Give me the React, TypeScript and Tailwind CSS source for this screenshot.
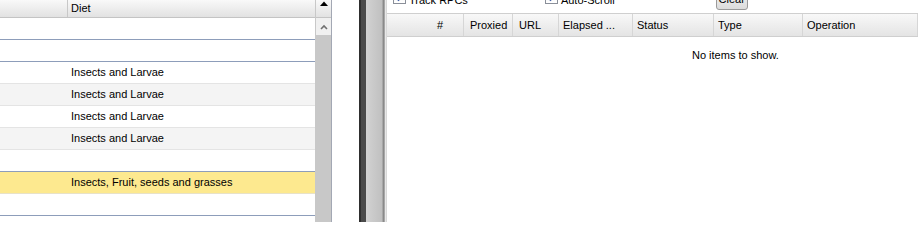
import React from "react";

type Row = { bg: string; border: string; text: string };

const rows: Row[] = [
  { bg: "bg-white", border: "border-[#8d9dba]", text: "" },
  { bg: "bg-white", border: "border-[#8d9dba]", text: "" },
  { bg: "bg-white", border: "border-[#e4e4e4]", text: "Insects and Larvae" },
  { bg: "bg-[#f4f4f4]", border: "border-[#e4e4e4]", text: "Insects and Larvae" },
  { bg: "bg-white", border: "border-[#e4e4e4]", text: "Insects and Larvae" },
  { bg: "bg-[#f4f4f4]", border: "border-[#e4e4e4]", text: "Insects and Larvae" },
  { bg: "bg-white", border: "border-[#8d9dba]", text: "" },
  { bg: "bg-[#fde98f]", border: "border-[#e8e2c8]", text: "Insects, Fruit, seeds and grasses" },
  { bg: "bg-white", border: "border-[#8d9dba]", text: "" },
  { bg: "bg-white", border: "border-[#e4e4e4]", text: "" },
];

const cols = [
  { label: "#", w: "w-[77px]", align: "justify-end pr-[20px]" },
  { label: "Proxied", w: "w-[49px]", align: "pl-[6px]" },
  { label: "URL", w: "w-[46px]", align: "pl-[6px]" },
  { label: "Elapsed ...", w: "w-[74px]", align: "pl-[4px]" },
  { label: "Status", w: "w-[81px]", align: "pl-[4px]" },
  { label: "Type", w: "w-[89px]", align: "pl-[4px]" },
  { label: "Operation", w: "flex-1", align: "pl-[4px]" },
];

function Check() {
  return (
    <div className="w-[13px] h-[13px] border border-[#8a8f99] bg-gradient-to-b from-[#f0f0f0] to-[#ffffff] flex items-center justify-center">
      <svg width="9" height="9" viewBox="0 0 9 9">
        <path d="M1 4.5 L3.5 7 L8 1.5" stroke="#3a5aa8" strokeWidth="1.8" fill="none" />
      </svg>
    </div>
  );
}

export default function App() {
  return (
    <div className="flex w-[918px] h-[222px] overflow-hidden bg-white text-[11px] text-black font-['Liberation_Sans',Arial,sans-serif]">
      {/* Left grid */}
      <div className="flex w-[332px] shrink-0 border-r border-[#a3a8b4]">
        <div className="flex flex-col w-[315px] shrink-0">
          <div className="flex h-[18px] shrink-0 border-b border-[#c4c4c4] bg-gradient-to-b from-[#f9f9f9] to-[#e2e2e2]">
            <div className="w-[68px] border-r border-[#c8c8c8]" />
            <div className="flex-1 pl-[3px] flex items-center leading-none">Diet</div>
          </div>
          {rows.map((r, i) => (
            <div
              key={i}
              className={`h-[22px] shrink-0 border-b ${r.border} ${r.bg} flex items-center pl-[71px] leading-none`}
            >
              {r.text}
            </div>
          ))}
        </div>
        <div className="flex flex-col w-[16px] shrink-0 border-l border-[#c8c8c8]">
          <div className="h-[18px] shrink-0 border-b border-[#c4c4c4] bg-gradient-to-b from-[#f9f9f9] to-[#e2e2e2] flex justify-center pt-[1px]">
            <svg width="8" height="5" viewBox="0 0 8 5">
              <path d="M0 5 L4 0.5 L8 5 Z" fill="#000" />
            </svg>
          </div>
          <div className="h-[17px] shrink-0 bg-[#f0f0f0] flex justify-center pt-[6px]">
            <svg width="8" height="6" viewBox="0 0 8 6">
              <path d="M1 5 L4 2 L7 5" stroke="#707070" strokeWidth="1.6" fill="none" />
            </svg>
          </div>
          <div className="flex-1 bg-[#c8c8c8]" />
        </div>
      </div>

      {/* gap */}
      <div className="w-[27px] shrink-0 bg-white" />

      {/* splitter */}
      <div className="flex shrink-0 h-full">
        <div className="w-[2px] bg-[#2e2e2e]" />
        <div className="w-[5px] bg-[#4a4a4a]" />
        <div className="w-[16px] bg-gradient-to-r from-[#d2d2d2] to-[#c0c0c0]" />
        <div className="w-[1px] bg-[#a8a8a8]" />
        <div className="w-[1px] bg-[#8a8a8a]" />
        <div className="w-[1px] bg-[#a8a8a8]" />
        <div className="w-[1px] bg-[#e8e8e8]" />
      </div>

      {/* Right panel */}
      <div className="flex flex-col flex-1 min-w-0 border-l border-[#d8d8d8]">
        <div className="h-[13px] shrink-0 overflow-hidden relative">
          <div className="flex items-start pl-[6px] -mt-[9px]">
            <Check />
            <span className="ml-[3px] mt-[3px] leading-[13px]">Track RPCs</span>
            <div className="ml-[77px]">
              <Check />
            </div>
            <span className="ml-[3px] mt-[3px] leading-[13px]">Auto-Scroll</span>
            <div className="ml-[101px] -mt-[2px] h-[21px] w-[32px] rounded-[3px] border border-[#9a9a9a] bg-gradient-to-b from-[#f4f4f4] to-[#dcdcdc] flex items-center justify-center leading-none">
              Clear
            </div>
          </div>
        </div>
        <div className="flex h-[24px] shrink-0 border-t border-b border-[#cfcfcf] bg-gradient-to-b from-[#f8f8f8] to-[#e4e4e4]">
          {cols.map((c) => (
            <div
              key={c.label}
              className={`${c.w} shrink-0 border-r border-[#d6d6d6] flex items-center leading-none ${c.align}`}
            >
              {c.label}
            </div>
          ))}
        </div>
        <div className="pl-[305px] pt-[13px] leading-none">No items to show.</div>
      </div>
    </div>
  );
}
